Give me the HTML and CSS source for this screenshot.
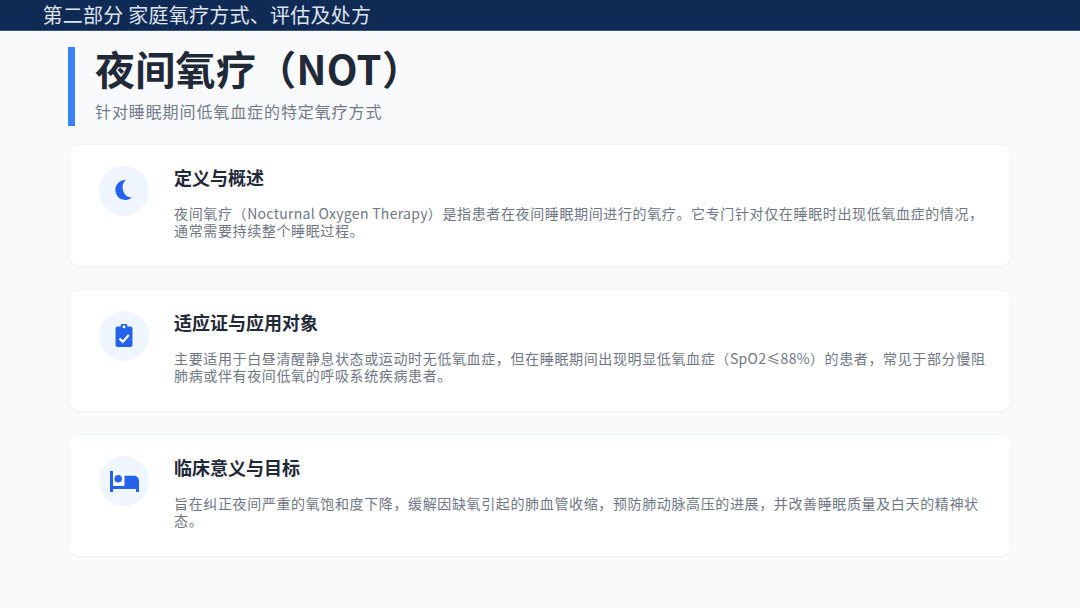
FILE: index.html
```html
<!DOCTYPE html>
<html lang="zh-CN">
<head>
<meta charset="utf-8">
<title>夜间氧疗（NOT）</title>
<link rel="stylesheet" href="styles.css">
</head>
<body>
<header class="topbar">第二部分 家庭氧疗方式、评估及处方</header>
<main class="content">
  <section class="heading">
    <h1 class="title">夜间氧疗（NOT）</h1>
    <p class="subtitle">针对睡眠期间低氧血症的特定氧疗方式</p>
  </section>
  <article class="card">
    <div class="icon">
      <svg viewBox="0 0 24 24" width="24" height="24"><path d="M14 1A10 10 0 1 0 19.700 18.700 10.200 10.200 0 0 1 14 1Z" fill="#2563eb"/></svg>
    </div>
    <div class="body">
      <h2 class="card-title">定义与概述</h2>
      <p class="card-text">夜间氧疗（<span class="latin">Nocturnal Oxygen Therapy</span>）是指患者在夜间睡眠期间进行的氧疗。它专门针对仅在睡眠时出现低氧血症的情况，通常需要持续整个睡眠过程。</p>
    </div>
  </article>
  <article class="card">
    <div class="icon">
      <svg viewBox="0 0 24 24" width="24" height="24"><path fill-rule="evenodd" d="M5.500 2.500H8.600A3.400 3.400 0 0 1 15.400 2.500H18.500A2 2 0 0 1 20.500 4.500V21A2 2 0 0 1 18.500 23H5.500A2 2 0 0 1 3.500 21V4.500A2 2 0 0 1 5.500 2.500ZM12 1.300A1.500 1.500 0 1 0 12 4.300 1.500 1.500 0 0 0 12 1.300Z" fill="#2563eb"/><path d="M7.500 14.500L10.800 17.800 16.800 11" fill="none" stroke="#fff" stroke-width="2.200"/></svg>
    </div>
    <div class="body">
      <h2 class="card-title">适应证与应用对象</h2>
      <p class="card-text">主要适用于白昼清醒静息状态或运动时无低氧血症，但在睡眠期间出现明显低氧血症（<span class="latin">SpO2≤88%</span>）的患者，常见于部分慢阻肺病或伴有夜间低氧的呼吸系统疾病患者。</p>
    </div>
  </article>
  <article class="card">
    <div class="icon">
      <svg viewBox="0 0 29 21" width="29" height="21"><path d="M0 0H3V14.700H14.300V4.700H24A5 5 0 0 1 29 9.700V21H26V18H3V21H0Z" fill="#2563eb"/><rect x="3" y="2.500" width="11.300" height="12.200" fill="#fff"/><circle cx="8.200" cy="7.800" r="3.800" fill="#2563eb"/></svg>
    </div>
    <div class="body">
      <h2 class="card-title">临床意义与目标</h2>
      <p class="card-text">旨在纠正夜间严重的氧饱和度下降，缓解因缺氧引起的肺血管收缩，预防肺动脉高压的进展，并改善睡眠质量及白天的精神状态。</p>
    </div>
  </article>
</main>
</body>
</html>
```
FILE: styles.css
```css
* { box-sizing: border-box; }
html, body { margin: 0; padding: 0; }
body {
  width: 1080px;
  height: 608px;
  overflow: hidden;
  background: #f8fafc;
  font-family: "Noto Sans CJK SC", "Noto Sans", sans-serif;
}
.topbar {
  height: 31px;
  padding-left: 42.500px;
  background: #0f2a55;
  border-bottom: 1px solid #3c5272;
  color: #dfe5ee;
  font-size: 20px;
  line-height: 29px;
  letter-spacing: 0.25px;
}
.content {
  display: flex;
  flex-direction: column;
  gap: 22px;
  padding: 16px 68px 0;
}
.heading {
  height: 79px;
  margin-bottom: -4px;
  padding-left: 20px;
  border-left: 7px solid #3b82f6;
}
.title {
  margin: -2px 0 0;
  color: #1f2937;
  font-size: 40px;
  font-weight: 700;
  line-height: 46px;
  letter-spacing: 0.3px;
}
.subtitle {
  margin: 8px 0 0;
  color: #737b89;
  font-size: 16px;
  line-height: 24px;
  letter-spacing: 0.9px;
}
.card {
  display: flex;
  gap: 25px;
  height: 123px;
  padding: 21px 24px 0 30px;
  background: #fff;
  border: 1px solid #f0f3f7;
  border-radius: 12px;
  box-shadow: 0 1px 2px rgba(15, 23, 42, 0.02);
}
.icon {
  display: flex;
  flex: none;
  align-items: center;
  justify-content: center;
  width: 50px;
  height: 50px;
  border-radius: 50%;
  background: #eff6ff;
}
.body { flex: 1; min-width: 0; }
.card-title {
  margin: -1px 0 0;
  color: #1f2937;
  font-size: 18px;
  font-weight: 700;
  line-height: 24px;
}
.card-text {
  margin: 16px 0 0;
  color: #6f7785;
  font-size: 14px;
  line-height: 17px;
  letter-spacing: 0.63px;
}
.latin { letter-spacing: 0.3px; }
```
